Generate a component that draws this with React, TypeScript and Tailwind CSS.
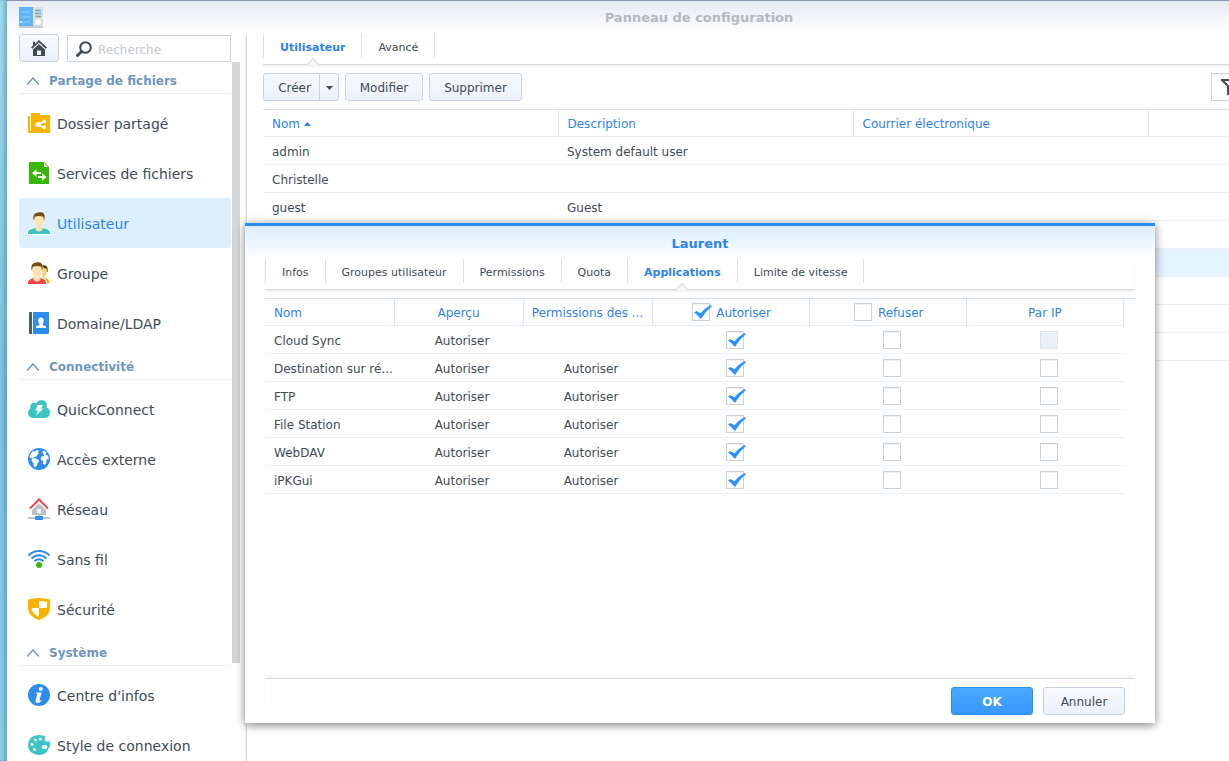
import { useState } from 'react';
import type { ReactNode } from 'react';

type MenuItem = {
  label: string;
  icon: ReactNode;
};

type MenuSection = {
  title: string;
  items: MenuItem[];
};

type AppRule = {
  name: string;
  group: string;
  allow: boolean;
  deny: boolean;
  ipDisabled?: boolean;
};

const FolderIcon = () => (
  <svg width="22" height="22" viewBox="0 0 22 22">
    <path d="M0 4h2v15h1v2H0z" fill="#fab400" />
    <path d="M3 1h9v2h10v18H3z" fill="#fab400" />
    <path d="M2.500 4v14" stroke="#fff" strokeWidth="1" />
    <path d="M10 12.500l6-3M10 12.500l6 3" stroke="#fff" strokeWidth="1.600" />
    <circle cx="10" cy="12.500" r="2.600" fill="#fff" />
    <circle cx="16.300" cy="9.400" r="1.800" fill="#fff" />
    <circle cx="16.300" cy="15.400" r="1.800" fill="#fff" />
  </svg>
);

const FileServicesIcon = () => (
  <svg width="22" height="22" viewBox="0 0 22 22">
    <path d="M2 0h14l5 5v16q0 1-1 1H2q-1 0-1-1V1q0-1 1-1z" fill="#36b800" />
    <path d="M16 1v4h4z" fill="#fff" />
    <path d="M4 11l4.500-4v3H13v2H8.500v3z" fill="#fff" />
    <path d="M18.500 15L14 11v3h-4v2h4v3z" fill="#fff" />
  </svg>
);

const UserIcon = () => (
  <svg className="overflow-visible" width="22" height="22" viewBox="0 0 22 22">
    <path
      d="M0 22v-1.500Q0 18.500 2 17.700L8 15.500h6l6 2.200q2 .8 2 2.800V22z"
      fill="#3cc3c3"
      stroke="#fff"
      strokeWidth="1.500"
      paintOrder="stroke"
    />
    <path d="M6 4h10v4.500q0 3-1.700 4.800-.8.900-.8 2.200l1.300.8q-.8 3.200-3.800 3.200t-3.800-3.200l1.300-.8q0-1.300-.8-2.200Q6 11.500 6 8.500z" fill="#fce3b0" />
    <path d="M5.600 8Q4.500 2.500 8 1q3-1.400 6.500-.4Q17.500 2 16.400 8H16l-.8-3.300Q11 3.300 6.800 4.700L6 8z" fill="#754c0f" />
  </svg>
);

const GroupIcon = () => (
  <svg width="22" height="22" viewBox="0 0 22 22">
    <path d="M14 3.500q5-.8 5.600 3v3.500h-1z" fill="#5a3a08" />
    <path d="M14 6l4.500.5.500 3q-.3 4-2.500 6v1.500l-2-1z" fill="#f7cf85" />
    <path d="M17.500 15.800l2.500 1.200q1.700.8 2 4h-3q0-3-1.500-3.700z" fill="#fab400" />
    <path d="M0 22v-1.500Q0 18.500 1.700 17.700L6 15.500h6l4.300 2.200q1.700.8 1.700 2.800V22z" fill="#f04646" />
    <path d="M4 4h10v4.500q0 3-1.700 4.800-.8.900-.8 2.200l1.300.8Q12 19.500 9 19.500t-3.800-3.200l1.300-.8q0-1.300-.8-2.200Q4 11.500 4 8.500z" fill="#fce3b0" />
    <path d="M3.600 8Q2.500 2.500 6 1q3-1.400 6.500-.4Q15.500 2 14.400 8H14l-.8-3.300Q9 3.300 4.800 4.700L4 8z" fill="#754c0f" />
  </svg>
);

const DomainIcon = () => (
  <svg width="22" height="22" viewBox="0 0 22 22">
    <path d="M4 0v22H2q-1 0-1-1V1q0-1 1-1z" fill="#505a64" />
    <path d="M5 0h15q1 0 1 1v20q0 1-1 1H5z" fill="#2d8cf0" />
    <path d="M10.300 8.500q0-3 2.700-3t2.700 3q0 2.300-1.200 3.500v1l3.500 1.200V16H8v-1.800l3.500-1.200v-1q-1.200-1.200-1.200-3.500z" fill="#fff" />
  </svg>
);

const QuickConnectIcon = () => (
  <svg width="22" height="22" viewBox="0 0 22 22">
    <path
      d="M5 20q-5-.5-5-5 0-3 2.300-4.200Q1.500 6 5.500 4.800q1.600-.4 3 .2Q10 2 13.500 2q5 .3 5.300 4.800.3 1-.3 2.700Q22 11 22 14.700 21.700 19.500 17 20z"
      fill="#3cc3c3"
    />
    <path d="M9.500 7H15l-2 3.500h2.500L8 17.500l2-5H7.500z" fill="#fff" />
  </svg>
);

const GlobeIcon = () => (
  <svg width="22" height="22" viewBox="0 0 22 22">
    <circle cx="11" cy="11" r="11" fill="#2d8cf0" />
    <path d="M1.500 8.500Q3 4.500 5 3l2 .5L8.500 2 11 2.500 10 4.500l1 1-2 1.500-.5 1.500-2 .5-1.500 1.500-2.500-.5z" fill="#fff" />
    <path d="M3.500 11.500Q5 9.500 8 10.500l3 1.700q.3 2-1.500 3L9 17.500 7 19.500 5.500 18l.2-2.500-1.700-2z" fill="#fff" />
    <path d="M14 4l2-1.500 2.500 2-1 2.500 2.500.5 1 4-1.500-.5-1 1.500-.3 3-1.700 1.500-1.500-1.500.2-2.500-2-1Q12 10.500 13.500 8.500L16 8l-.5-2z" fill="#fff" />
  </svg>
);

const NetworkIcon = () => (
  <svg width="22" height="22" viewBox="0 0 22 22">
    <path d="M2 10.500L11 1.500l9 9" fill="none" stroke="#f04646" strokeWidth="2" />
    <path d="M11 5l7 7v5H4v-5z" fill="#b9c3cd" />
    <rect x="9" y="11" width="4" height="4" fill="#fff" />
    <path d="M0 20h22M11 16v4" stroke="#b9c3cd" strokeWidth="2" />
    <rect x="7" y="18" width="8" height="4" rx="1" fill="#2d8cf0" />
  </svg>
);

const WifiIcon = () => (
  <svg width="22" height="22" viewBox="0 0 22 22">
    <g fill="none" stroke="#2d8cf0" strokeWidth="2">
      <path d="M.5 7.500Q5 3 11 3t10.500 4.500" />
      <path d="M3.500 10.500Q7 7.200 11 7.200t7.500 3.300" />
      <path d="M6.500 13.300Q8.500 11.300 11 11.300t4.500 2" />
    </g>
    <circle cx="11" cy="17" r="3" fill="#36b800" />
  </svg>
);

const ShieldIcon = () => (
  <svg width="22" height="22" viewBox="0 0 22 22">
    <path d="M0 1.500Q11-1.500 22 1.500v9q0 7.500-11 11.500Q0 18 0 10.500z" fill="#fab400" />
    <path d="M11 3q4 0 8 .8V10h-8z" fill="#fff" />
    <path d="M3.500 10H11v8.800Q4 15.500 3.500 10z" fill="#fff" />
  </svg>
);

const InfoIcon = () => (
  <svg width="22" height="22" viewBox="0 0 22 22">
    <circle cx="11" cy="11" r="11" fill="#2d8cf0" />
    <circle cx="12.800" cy="5" r="2" fill="#fff" />
    <path d="M8 8.500h5.700l-2.200 7.500q-.2 1 .6.800l1.400-.8.300.7Q11.500 19 9.500 19q-2.500-.2-2-2.300l1.700-6.400q.1-.6-.6-.7l-1-.1z" fill="#fff" />
  </svg>
);

const PaletteIcon = () => (
  <svg width="22" height="22" viewBox="0 0 22 22">
    <path d="M11 1q4 0 7 2-2 1.500-1 3.500 1.500 2 4.500.5.700 2 .5 4.500-.5 2-1.500 2.500Q19 21 11 21 0 20 0 11 .5 1.500 11 1z" fill="#3cc3c3" />
    <g fill="#fff">
      <circle cx="4" cy="10.500" r="1.500" />
      <circle cx="7.500" cy="6" r="1.500" />
      <circle cx="12.500" cy="5" r="1.500" />
      <circle cx="6.500" cy="15.500" r="1.500" />
      <ellipse cx="16.500" cy="13" rx="2.800" ry="2" />
    </g>
  </svg>
);

const sections: MenuSection[] = [
  {
    title: 'Partage de fichiers',
    items: [
      { label: 'Dossier partagé', icon: <FolderIcon /> },
      { label: 'Services de fichiers', icon: <FileServicesIcon /> },
      { label: 'Utilisateur', icon: <UserIcon /> },
      { label: 'Groupe', icon: <GroupIcon /> },
      { label: 'Domaine/LDAP', icon: <DomainIcon /> },
    ],
  },
  {
    title: 'Connectivité',
    items: [
      { label: 'QuickConnect', icon: <QuickConnectIcon /> },
      { label: 'Accès externe', icon: <GlobeIcon /> },
      { label: 'Réseau', icon: <NetworkIcon /> },
      { label: 'Sans fil', icon: <WifiIcon /> },
      { label: 'Sécurité', icon: <ShieldIcon /> },
    ],
  },
  {
    title: 'Système',
    items: [
      { label: "Centre d'infos", icon: <InfoIcon /> },
      { label: 'Style de connexion', icon: <PaletteIcon /> },
    ],
  },
];

const users = [
  { name: 'admin', description: 'System default user' },
  { name: 'Christelle', description: '' },
  { name: 'guest', description: 'Guest' },
  { name: '', description: '' },
  { name: '', description: '', selected: true },
  { name: '', description: '' },
  { name: '', description: '' },
  { name: '', description: '' },
];

const initialRules: AppRule[] = [
  { name: 'Cloud Sync', group: '', allow: true, deny: false, ipDisabled: true },
  { name: 'Destination sur ré...', group: 'Autoriser', allow: true, deny: false },
  { name: 'FTP', group: 'Autoriser', allow: true, deny: false },
  { name: 'File Station', group: 'Autoriser', allow: true, deny: false },
  { name: 'WebDAV', group: 'Autoriser', allow: true, deny: false },
  { name: 'iPKGui', group: 'Autoriser', allow: true, deny: false },
];

const buttonClass =
  'h-7 rounded-[3px] border border-[#c8d2e1] bg-linear-to-b from-[#f7faff] to-[#ebf0fa] text-[#414b55] text-[12px]';

type TabsProps = {
  tabs: string[];
  active: string;
  onChange: (tab: string) => void;
};

const Tabs = ({ tabs, active, onChange }: TabsProps) => (
  <div className="flex border-b border-[#d5d7da] pb-[6px] shadow-[0_2px_3px_-1px_rgba(0,0,0,0.1)]">
    {tabs.map((tab) => (
      <button
        key={tab}
        type="button"
        onClick={() => onChange(tab)}
        className={`relative h-6 border-l border-[#d7e1eb] px-4 pt-[5px] text-[11px] last:border-r ${
          tab === active ? 'font-bold text-[#2d82f0]' : 'text-[#414b55]'
        }`}
      >
        {tab}
        {tab === active && (
          <svg className="absolute top-full left-1/2 -translate-x-1/2" width="14" height="7" viewBox="0 0 14 7">
            <path d="M0 7L7 0l7 7z" fill="#f5f5f5" />
            <path d="M0 6.500h1L7 .5l6 6h1" fill="none" stroke="#d0d2d5" />
          </svg>
        )}
      </button>
    ))}
  </div>
);

type CheckboxProps = {
  label: string;
  checked?: boolean;
  disabled?: boolean;
  onChange?: (checked: boolean) => void;
};

const Checkbox = ({ label, checked = false, disabled, onChange }: CheckboxProps) => (
  <span className="relative inline-block size-[18px] align-middle">
    <input
      type="checkbox"
      aria-label={label}
      checked={checked}
      disabled={disabled}
      onChange={(e) => onChange?.(e.target.checked)}
      className="block size-[18px] appearance-none border border-[#c8d2dc] bg-white shadow-[inset_0_1px_0_#f0f2f5] disabled:border-[#dce3ea] disabled:bg-[#ebf0f5]"
    />
    {checked && (
      <svg className="pointer-events-none absolute top-0 left-0 overflow-visible" width="18" height="18" viewBox="0 0 18 18">
        <path d="M2 9.500L4.500 8l4 2.200Q13 5 18.500 2L20 3Q13.500 8.500 9.300 15.500H8.200Q6 12 2 9.500z" fill="#2d91ff" />
      </svg>
    )}
  </span>
);

const Sidebar = () => {
  const [current, setCurrent] = useState('Utilisateur');

  return (
    <aside className="flex w-[239px] shrink-0 flex-col pl-3">
      <div className="flex shrink-0 gap-2 pr-[15px]">
        <button type="button" aria-label="Accueil" className={`${buttonClass} flex w-10 items-center justify-center`}>
          <svg width="16" height="16" viewBox="0 0 16 16" fill="#414b55">
            <path d="M8 0l8 7.500-1.300 1.300L8 2.600 1.300 8.800 0 7.500l2-1.900V1.800h2v2z" />
            <path d="M8 4l6 5.500V16H2V9.500zM6 10.500V15h4v-4.500z" fillRule="evenodd" />
          </svg>
        </button>
        <label className="mt-px flex h-[27px] flex-1 items-center gap-[6px] border border-[#c8d2e1] bg-white pl-2">
          <svg className="shrink-0" width="16" height="16" viewBox="0 0 16 16" fill="none" stroke="#414b55">
            <circle cx="9.500" cy="6.500" r="5.300" strokeWidth="2" />
            <path d="M5.500 10.500L1.500 14.500" strokeWidth="3" strokeLinecap="round" />
          </svg>
          <input
            type="text"
            aria-label="Recherche"
            placeholder="Recherche"
            className="w-full min-w-0 pt-0.5 text-[12px] text-[#414b55] outline-none placeholder:text-[#c3c8cd]"
          />
        </label>
      </div>

      <div className="flex min-h-0 flex-1">
        <nav className="w-[212px] overflow-hidden">
          {sections.map((section) => (
            <div key={section.title}>
              <h2 className="mb-1 flex h-8 items-center gap-[10px] border-b border-[#ebeff3] pt-[6px] pl-2 text-[12px] font-bold text-[#6e96be]">
                <svg width="12" height="8" viewBox="0 0 12 8" fill="none" stroke="#6e96be" strokeWidth="1.500">
                  <path d="M0 7.500L6 1l6 6.500" />
                </svg>
                {section.title}
              </h2>
              {section.items.map((item) => (
                <button
                  key={item.label}
                  type="button"
                  onClick={() => setCurrent(item.label)}
                  className={`flex h-[50px] w-full items-center gap-[7px] rounded-[3px] pl-[9px] text-[14px] ${
                    item.label === current ? 'bg-[#dcf0ff] text-[#2d82f0]' : 'text-[#414b55]'
                  }`}
                >
                  {item.icon}
                  <span className="pt-0.5">{item.label}</span>
                </button>
              ))}
            </div>
          ))}
        </nav>
        {/* scrollbar thumb */}
        <div className="ml-px h-[86%] w-2 bg-[#d5d6d8]" />
      </div>
    </aside>
  );
};

const UserPanel = () => {
  const [tab, setTab] = useState('Utilisateur');

  return (
    <main className="min-w-0 flex-1 border-l border-[#d7d9dc] pl-4 shadow-[-1px_0_2px_rgba(0,0,0,0.08)]">
      <Tabs tabs={['Utilisateur', 'Avancé']} active={tab} onChange={setTab} />

      <div className="flex gap-[6px] py-2">
        <div className="flex">
          <button type="button" className={`${buttonClass} w-[57px] rounded-r-none pt-0.5 pl-[6px]`}>Créer</button>
          <button
            type="button"
            aria-label="Plus d'options"
            className={`${buttonClass} -ml-px flex w-5 items-center justify-center rounded-l-none pt-0.5`}
          >
            <svg width="7" height="4" viewBox="0 0 7 4" fill="#414b55">
              <path d="M0 0h7L3.500 4z" />
            </svg>
          </button>
        </div>
        <button type="button" className={`${buttonClass} w-[78px] pt-0.5`}>Modifier</button>
        <button type="button" className={`${buttonClass} w-[93px] pt-0.5`}>Supprimer</button>
        <label className="ml-auto flex h-7 w-[180px] items-center gap-2 border border-[#c8d2e1] pl-[9px] shadow-[inset_0_1px_0_#f0f2f5]">
          <svg className="shrink-0" width="16" height="16" viewBox="0 0 16 16" fill="none" stroke="#414b55" strokeWidth="2">
            <path d="M0 1h16M1 1l6 6v9M15 1L9 7v7l-2 2" />
          </svg>
          <input type="text" aria-label="Filtrer" className="w-full min-w-0 text-[12px] outline-none" />
        </label>
      </div>

      <table className="w-full table-fixed border-t border-[#d7e1eb] text-left text-[12px] text-[#414b55]">
        <thead>
          <tr className="h-[27px] border-b border-[#e6edf5] text-[#2d82f0]">
            <th className="w-[295px] border-r border-[#dce6f0] px-[9px] pt-0.5 font-normal">
              <span className="flex items-center gap-1">
                Nom
                <svg width="7" height="4" viewBox="0 0 7 4" fill="#2d82f0">
                  <path d="M0 4h7L3.500 0z" />
                </svg>
              </span>
            </th>
            <th className="w-[295px] border-r border-[#dce6f0] px-[9px] pt-0.5 font-normal">Description</th>
            <th className="w-[295px] border-r border-[#dce6f0] px-[9px] pt-0.5 font-normal">Courrier électronique</th>
            <th />
          </tr>
        </thead>
        <tbody>
          {users.map((user, i) => (
            <tr key={i} className={`h-7 border-b border-[#ebeff4] ${user.selected ? 'bg-[#e6f4ff]' : ''}`}>
              <td className="px-[9px] pt-0.5">{user.name}</td>
              <td className="px-[9px] pt-0.5">{user.description}</td>
              <td />
              <td />
            </tr>
          ))}
        </tbody>
      </table>
    </main>
  );
};

const dialogTabs = ['Infos', 'Groupes utilisateur', 'Permissions', 'Quota', 'Applications', 'Limite de vitesse'];

const UserDialog = () => {
  const [tab, setTab] = useState('Applications');
  const [rules, setRules] = useState(initialRules);

  const setAllow = (index: number, value: boolean) => {
    setRules(rules.map((r, i) => (i === index ? { ...r, allow: value, deny: false } : r)));
  };

  const setDeny = (index: number, value: boolean) => {
    setRules(rules.map((r, i) => (i === index ? { ...r, deny: value, allow: false } : r)));
  };

  const headClass = 'border-r border-[#dce6f0] font-normal';

  return (
    <div
      role="dialog"
      aria-label="Laurent"
      className="absolute top-[223px] left-[245px] flex h-[500px] w-[910px] flex-col border-t-[3px] border-[#2d8cf0] bg-white px-5 pb-2 shadow-[0_2px_9px_rgba(0,0,0,0.5)]"
    >
      <div className="-mx-5 flex h-[33px] shrink-0 items-center justify-center bg-linear-to-b from-[#dceeff] to-white pt-0.5">
        <h2 className="text-[13px] font-bold text-[#2d82f0]">Laurent</h2>
      </div>
      <Tabs tabs={dialogTabs} active={tab} onChange={setTab} />

      <div className="mt-2 flex-1">
        <div className="border-t border-[#d7e1eb]">
          <table className="w-[859px] table-fixed text-center text-[12px] text-[#414b55]">
            <thead>
              <tr className="h-[26px] border-b border-[#e6edf5] text-[#2d82f0]">
                <th className={`${headClass} w-[129px] pt-[3px] pl-[9px] text-left`}>Nom</th>
                <th className={`${headClass} w-[129px] pt-[3px]`}>Aperçu</th>
                <th className={`${headClass} w-[129px] pt-[3px] whitespace-nowrap`}>Permissions des ...</th>
                <th className={`${headClass} pl-0.5`}>
                  <span className="flex items-center justify-center gap-[6px]">
                    <Checkbox
                      label="Autoriser tout"
                      checked={rules.every((r) => r.allow)}
                      onChange={(v) => setRules(rules.map((r) => ({ ...r, allow: v, deny: false })))}
                    />
                    <span className="pt-0.5">Autoriser</span>
                  </span>
                </th>
                <th className={`${headClass} pl-0.5`}>
                  <span className="flex items-center justify-center gap-[6px]">
                    <Checkbox
                      label="Refuser tout"
                      checked={rules.every((r) => r.deny)}
                      onChange={(v) => setRules(rules.map((r) => ({ ...r, deny: v, allow: false })))}
                    />
                    <span className="pt-0.5">Refuser</span>
                  </span>
                </th>
                <th className={`${headClass} pt-[3px]`}>Par IP</th>
              </tr>
            </thead>
            <tbody>
              {rules.map((rule, i) => (
                <tr key={rule.name} className="h-7 border-b border-[#ebf0f5]">
                  <td className="overflow-hidden pt-1 pl-[9px] text-left whitespace-nowrap">{rule.name}</td>
                  <td className="pt-1 pl-[7px]">{rule.allow ? 'Autoriser' : 'Refuser'}</td>
                  <td className="pt-1 pl-[7px]">{rule.group}</td>
                  <td className="pt-0.5 pl-2">
                    <Checkbox label={`Autoriser ${rule.name}`} checked={rule.allow} onChange={(v) => setAllow(i, v)} />
                  </td>
                  <td className="pt-0.5 pl-2">
                    <Checkbox label={`Refuser ${rule.name}`} checked={rule.deny} onChange={(v) => setDeny(i, v)} />
                  </td>
                  <td className="pt-0.5 pl-2">
                    <Checkbox label={`Par IP ${rule.name}`} disabled={rule.ipDisabled} />
                  </td>
                </tr>
              ))}
            </tbody>
          </table>
        </div>
      </div>

      <div className="flex justify-end gap-[10px] border-t border-[#d8dadc] pt-2 pr-[10px] shadow-[0_-2px_3px_-1px_rgba(0,0,0,0.08)]">
        <button
          type="button"
          className="h-7 w-[82px] rounded-[3px] border border-[#2d8cf0] bg-linear-to-b from-[#4baaff] to-[#3796fa] pt-0.5 text-[12px] font-bold text-white"
        >
          OK
        </button>
        <button type="button" className={`${buttonClass} w-[82px] pt-0.5`}>Annuler</button>
      </div>
    </div>
  );
};

const App = () => {
  return (
    <div className="relative flex h-screen overflow-hidden bg-white font-['Verdana','DejaVu_Sans',sans-serif]">
      {/* desktop showing behind the window */}
      <div className="w-[7px] shrink-0 bg-linear-to-b from-[#9adbea] via-[#7dc0e4] to-[#86cdee] shadow-[inset_-3px_0_3px_rgba(40,90,120,0.3)]" />

      {/* the window goes past the right edge of the screen */}
      <div className="-mr-[162px] flex min-w-0 flex-1 flex-col border-t border-[#8c96aa]">
        <header className="relative flex h-[33px] shrink-0 items-center justify-center bg-linear-to-b from-[#e6eaf2] to-white">
          <svg className="absolute top-[6px] left-3" width="24" height="21" viewBox="0 0 24 21">
            <rect x="0" y="19" width="24" height="2" fill="#c9cdd2" />
            <rect x="0" y="0" width="14" height="19" fill="#5fb4f5" />
            <path d="M2 5h9M2 10h9M2 15h9" stroke="#8fd0ff" />
            <path d="M1 15h2" stroke="#c8ecff" strokeWidth="2" />
            <rect x="14" y="0" width="10" height="19" fill="#dadfe5" />
            <path d="M16 3.500h6M16 6.500h6M16 9.500h6" stroke="#8b96a0" strokeWidth="1.500" />
            <path d="M19 3.500h3M19 6.500h3" stroke="#5ec5ef" strokeWidth="1.500" />
            <path d="M16 9.500h3" stroke="#9bd82c" strokeWidth="1.500" />
            <circle cx="19" cy="15" r="2.800" fill="#fff" />
          </svg>
          <h1 className="text-[13px] font-bold text-[#b4b9be]">Panneau de configuration</h1>
        </header>
        <div className="flex min-h-0 flex-1">
          <Sidebar />
          <UserPanel />
        </div>
      </div>

      <UserDialog />
    </div>
  );
};

export default App;
